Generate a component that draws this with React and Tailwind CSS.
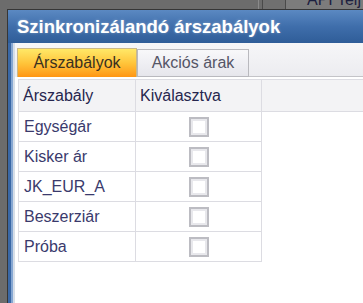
import React from "react";

const rows = ["Egységár", "Kisker ár", "JK_EUR_A", "Beszerziár", "Próba"];

function Checkbox() {
  return (
    <div className="w-[20px] h-[20px] border-2 border-[#bcbcc2] bg-white shadow-[inset_0_0_0_2px_#e8e8ec]" />
  );
}

export default function App() {
  return (
    <div
      className="w-[363px] h-[303px] overflow-hidden bg-[#6c6c6c] flex flex-col"
      style={{ fontFamily: '"Liberation Sans", Arial, sans-serif' }}
    >
      {/* background strip above window */}
      <div className="h-[9px] flex shrink-0">
        <div className="w-[258px]" />
        <div className="w-px bg-[#8a8a8a]" />
        <div className="w-[3px]" />
        <div className="w-px bg-[#4a4a4a]" />
        <div className="w-[22px] bg-[#707070]" />
        <div className="w-px bg-[#4a4a4a]" />
        <div className="flex-1 bg-[#7c7c7c] overflow-hidden relative">
          <span className="absolute left-[21px] top-[-9px] text-[16px] leading-[18px] text-[#1c2040]">
            API Telj
          </span>
        </div>
      </div>

      {/* window */}
      <div className="flex-1 ml-[7px] border-l border-t border-[#363636] flex flex-col bg-[#3d6ba8]">
        {/* title bar */}
        <div className="h-[33px] shrink-0 bg-gradient-to-b from-[#5b89c2] via-[#3f6eab] to-[#2f5d98] flex items-center pl-[9px] pt-[2px]">
          <span className="text-white font-bold text-[18.5px] leading-none [text-shadow:0_0_3px_rgba(255,255,255,0.35)]">
            Szinkronizálandó árszabályok
          </span>
        </div>

        {/* body */}
        <div className="flex-1 flex">
          <div className="w-[3px] bg-[#3a68a6]" />
          <div className="w-[2px] bg-[#86a7d2]" />
          <div className="w-[2px] bg-[#d6dee8]" />
          <div className="flex-1 bg-white flex flex-col">
            {/* tab strip */}
            <div className="h-[34px] shrink-0 bg-gradient-to-b from-[#f6f6f8] to-[#ececf0] flex items-end pl-[2px]">
              <div className="w-[120px] h-[29px] border border-b-0 border-[#c9b88a] bg-gradient-to-b from-[#ffe867] via-[#ffc53a] to-[#ff9612] flex items-center justify-center text-[16px] text-[#3a3020]">
                Árszabályok
              </div>
              <div className="w-[112px] h-[28px] border border-[#b9b9be] bg-gradient-to-b from-[#f8f8fa] to-[#e6e6ec] flex items-center justify-center text-[16px] text-[#555566]">
                Akciós árak
              </div>
              <div className="flex-1 h-px bg-[#c4c4c8]" />
            </div>

            {/* grid */}
            <div className="mt-[2px] ml-[3px] flex flex-col">
              <div className="h-[33px] flex border-t border-b border-[#dcdce2] bg-[#f3f3f5] border-l">
                <div className="w-[117px] border-r border-[#dcdce2] flex items-center pl-[4px] text-[16px] text-[#26264e]">
                  Árszabály
                </div>
                <div className="w-[126px] border-r border-[#dcdce2] flex items-center pl-[4px] text-[16px] text-[#26264e]">
                  Kiválasztva
                </div>
                <div className="flex-1" />
              </div>
              {rows.map((r) => (
                <div
                  key={r}
                  className="h-[30px] w-[244px] flex border-b border-l border-[#dcdce2]"
                >
                  <div className="w-[117px] border-r border-[#dcdce2] flex items-center pl-[5px] text-[16px] text-[#3a3a6c]">
                    {r}
                  </div>
                  <div className="w-[126px] border-r border-[#dcdce2] flex items-center justify-center">
                    <Checkbox />
                  </div>
                </div>
              ))}
            </div>
          </div>
        </div>
      </div>
    </div>
  );
}
